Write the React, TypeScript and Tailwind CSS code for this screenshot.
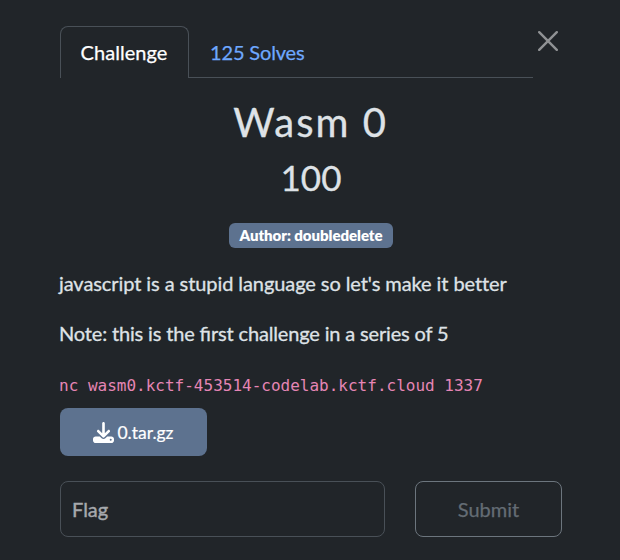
import { FaDownload } from "react-icons/fa6";

function Tabs() {
  return (
    <div className="flex items-start">
      <ul className="flex h-[52px] w-[473px] border-b border-[#495057] text-xl leading-[30px] [-webkit-text-stroke:0.25px]">
        <li className="h-[52px] w-[129px] rounded-t-lg border border-b-0 border-[#495057] bg-[#212529] pt-[10px] pr-[1px] text-center tracking-[0.05px] text-white">
          Challenge
        </li>
        <li className="pt-[11px] pl-[21px] tracking-[-0.15px] text-[#6ea8fe]">125 Solves</li>
      </ul>
      <button aria-label="Close" className="mt-[5px] ml-[5px] block text-[#909294]">
        <svg viewBox="0 0 20 20" className="h-5 w-5" fill="none" stroke="currentColor" strokeWidth="2.4" strokeLinecap="round">
          <path d="M1.2 1.2 18.8 18.8M18.8 1.2 1.2 18.8" />
        </svg>
      </button>
    </div>
  );
}

export default function App() {
  return (
    <main className="h-[560px] w-[620px] overflow-hidden bg-[#212529] pt-[26px] pl-[60px] font-['Lato',sans-serif] text-xl leading-[30px] text-[#dee2e6]">
      <Tabs />
      <div className="w-[502px]">
        <h2 className="mt-[19px] pr-[1px] text-center text-[40px] leading-[50px] tracking-[2px] [-webkit-text-stroke:0.3px]">Wasm 0</h2>
        <h3 className="mt-[9px] text-center text-[35px] leading-[42px] [-webkit-text-stroke:0.3px]">100</h3>
        <div className="mt-[25px] flex justify-center">
          <span className="flex h-[25px] w-[164px] items-center justify-center rounded-md bg-[#5d728f] text-[15px] leading-[15px] font-extrabold tracking-[-0.05px] whitespace-nowrap text-white">
            Author: doubledelete
          </span>
        </div>
        <p className="mt-[20px] -ml-px tracking-[-0.08px] whitespace-nowrap [-webkit-text-stroke:0.3px]">
          javascript is a stupid language so let's make it better
        </p>
        <p className="mt-5 -ml-px tracking-[-0.16px] whitespace-nowrap [-webkit-text-stroke:0.3px]">
          Note: this is the <span className="tracking-normal">fi</span>rst challenge in a series of 5
        </p>
        <p className="mt-[23px] -ml-px font-['DejaVu_Sans_Mono',monospace] text-base leading-[30px] whitespace-nowrap text-[#e685b5]">
          nc wasm0.kctf-453514-codelab.kctf.cloud 1337
        </p>
        <button className="mt-[7px] flex h-12 w-[147px] items-center justify-center gap-[3px] rounded-lg bg-[#5d728f] text-[17.5px] text-white">
          <FaDownload className="h-[21px] w-[21px]" />
          <span className="mt-[2px] [-webkit-text-stroke:0.2px]">0.tar.gz</span>
        </button>
        <form className="mt-[25px] flex gap-[30px]">
          <input
            placeholder="Flag"
            className="h-14 w-[325px] rounded-lg border border-[#495057] bg-transparent px-[11px] [-webkit-text-stroke:0.4px] placeholder:text-[#a6a9ad]"
          />
          <button type="button" className="h-14 w-[147px] rounded-lg border border-[#6c757d] text-[#646c74] [-webkit-text-stroke:0.25px]">
            Submit
          </button>
        </form>
      </div>
    </main>
  );
}
